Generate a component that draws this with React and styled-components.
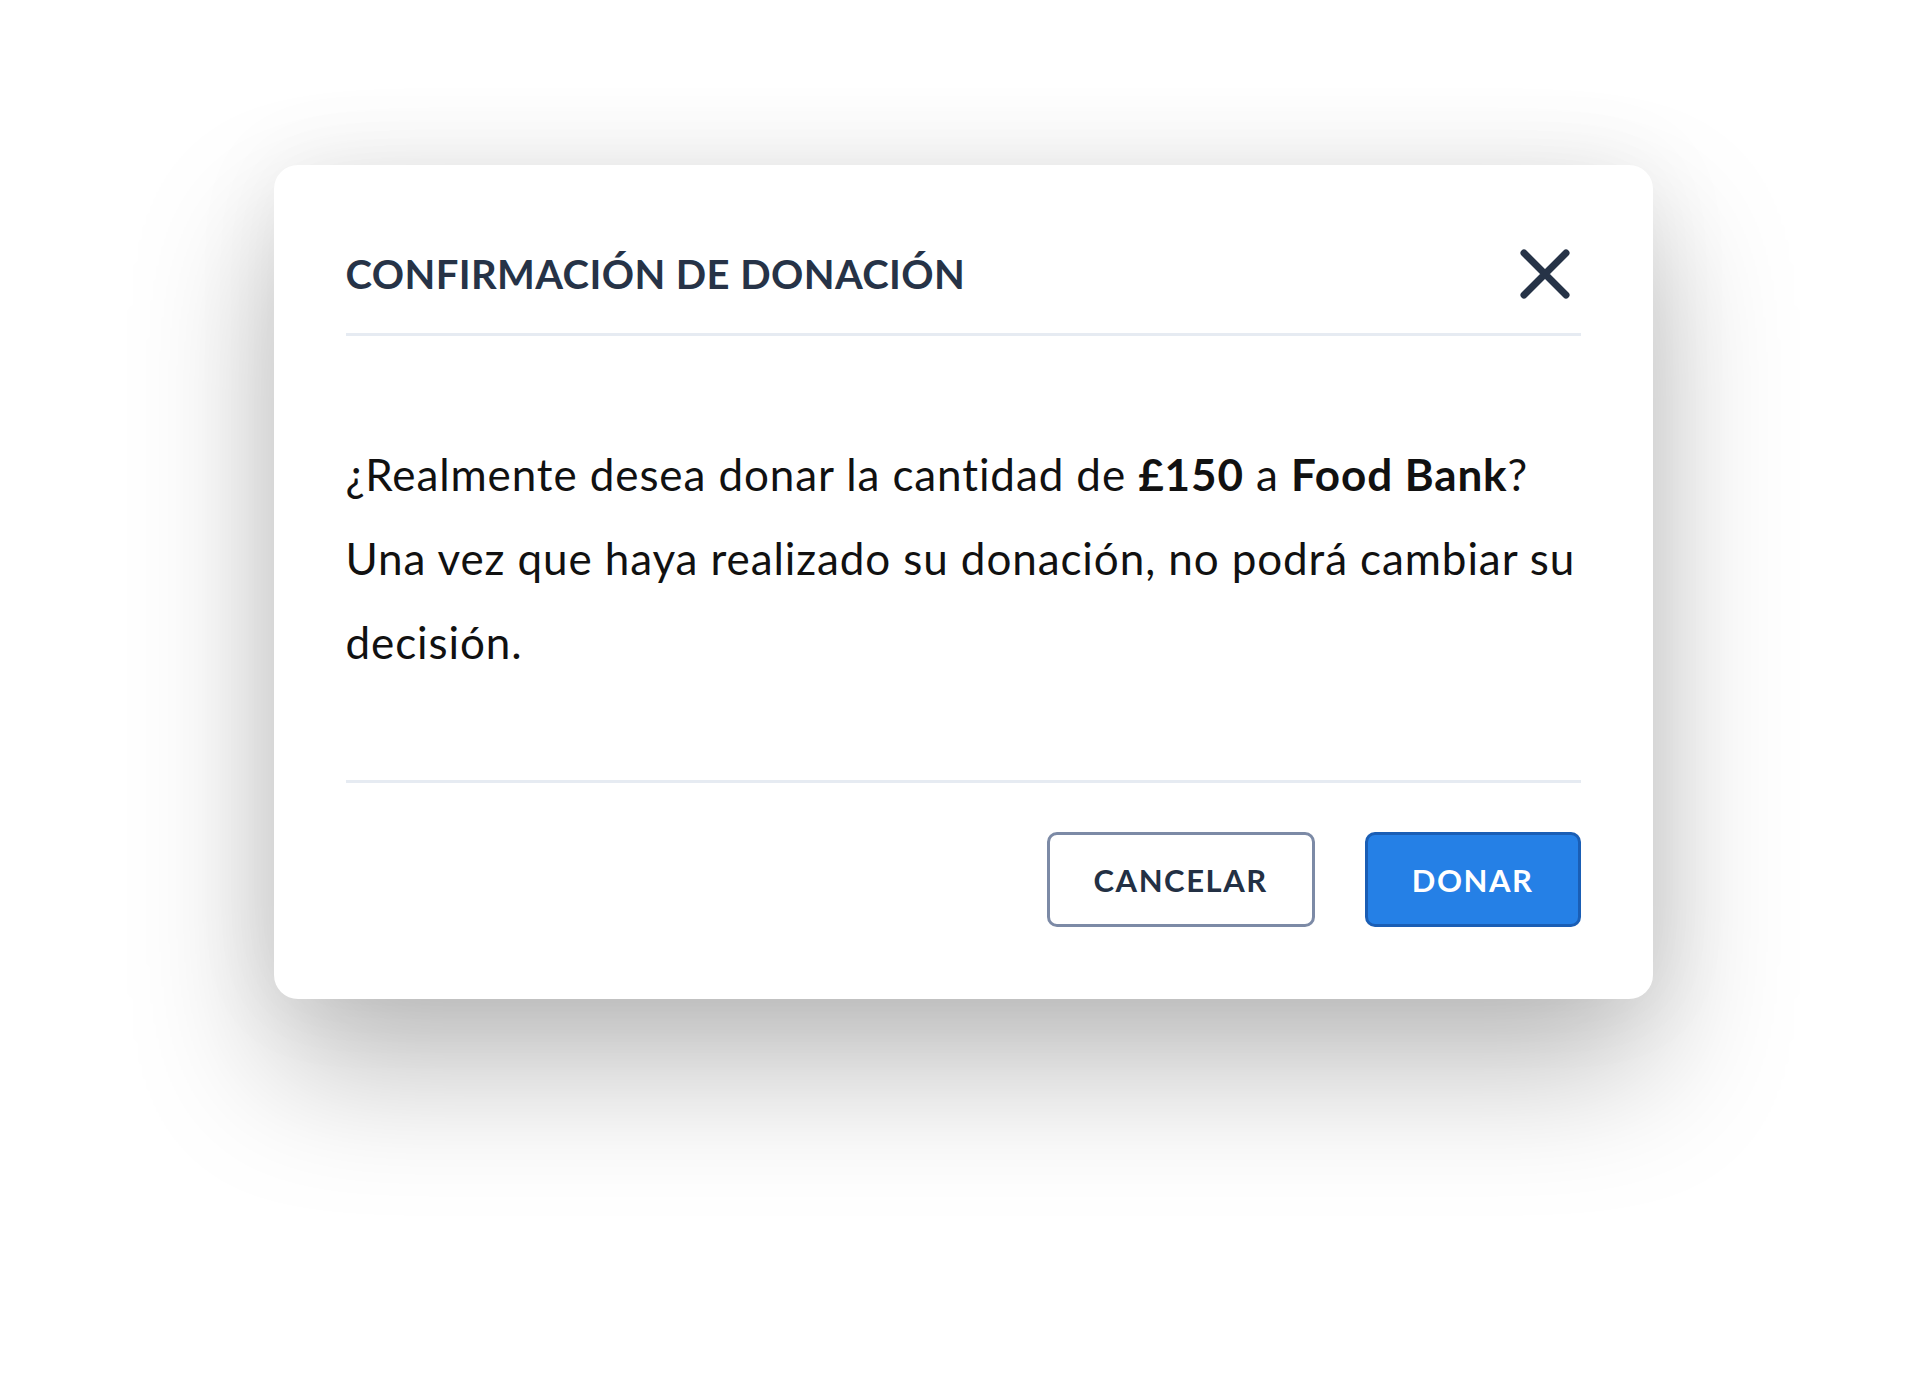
import styled, { createGlobalStyle } from 'styled-components';

const GlobalStyle = createGlobalStyle`
  html, body {
    margin: 0;
    background: #fff;
  }
  body {
    font-family: "Lato", "Noto Sans", sans-serif;
    -webkit-font-smoothing: antialiased;
  }
`;

const Page = styled.div`
  width: 1926px;
  height: 1380px;
  box-sizing: border-box;
  padding-top: 165px;
  display: flex;
  justify-content: center;
  align-items: flex-start;
  overflow: hidden;
`;

const Dialog = styled.div`
  width: 1379px;
  box-sizing: border-box;
  padding: 72px;
  background: #fff;
  border-radius: 24px;
  box-shadow: 0 70px 140px rgba(0, 0, 0, 0.26), 0 0 90px rgba(0, 0, 0, 0.07);
`;

const Header = styled.div`
  display: flex;
  align-items: center;
  justify-content: space-between;
  height: 74px;
  padding-bottom: 22px;
  border-bottom: 3px solid #e6ebf2;
`;

const Title = styled.h2`
  margin: 0;
  font-size: 40px;
  font-weight: 700;
  letter-spacing: 0.01em;
  color: #263347;
`;

const CloseButton = styled.button`
  width: 56px;
  height: 56px;
  margin-right: 8px;
  padding: 0;
  border: 0;
  background: transparent;
  display: flex;
  align-items: center;
  justify-content: center;
  cursor: pointer;
`;

const Body = styled.p`
  margin: 0;
  padding: 96px 0 96px;
  font-size: 44px;
  letter-spacing: 0.9px;
  line-height: 84px;
  color: #111;
  border-bottom: 3px solid #e6ebf2;

  strong {
    font-weight: 700;
  }
`;

const Footer = styled.div`
  display: flex;
  justify-content: flex-end;
  gap: 50px;
  padding-top: 49px;
`;

const Button = styled.button`
  height: 95px;
  padding: 0 44px;
  box-sizing: border-box;
  border-radius: 10px;
  border: 3px solid ${(p) => (p.$primary ? '#1a5eb5' : '#7c8aa6')};
  background: ${(p) => (p.$primary ? '#2580e6' : '#fff')};
  color: ${(p) => (p.$primary ? '#fff' : '#233044')};
  font-family: "Lato", "Noto Sans", sans-serif;
  font-size: 31px;
  font-weight: 700;
  letter-spacing: 0.05em;
  cursor: pointer;
`;

function CloseIcon() {
  return (
    <svg width="50" height="50" viewBox="0 0 50 50" fill="none">
      <path
        d="M4 4 L46 46 M46 4 L4 46"
        stroke="#263347"
        strokeWidth="7"
        strokeLinecap="round"
      />
    </svg>
  );
}

export default function App() {
  return (
    <>
      <GlobalStyle />
      <Page>
        <Dialog role="dialog" aria-labelledby="donation-title">
          <Header>
            <Title id="donation-title">CONFIRMACIÓN DE DONACIÓN</Title>
            <CloseButton aria-label="Cerrar">
              <CloseIcon />
            </CloseButton>
          </Header>
          <Body>
            ¿Realmente desea donar la cantidad de <strong>£150</strong> a{' '}
            <strong>Food Bank</strong>? Una vez que haya realizado su donación, no
            podrá cambiar su decisión.
          </Body>
          <Footer>
            <Button>CANCELAR</Button>
            <Button $primary>DONAR</Button>
          </Footer>
        </Dialog>
      </Page>
    </>
  );
}
